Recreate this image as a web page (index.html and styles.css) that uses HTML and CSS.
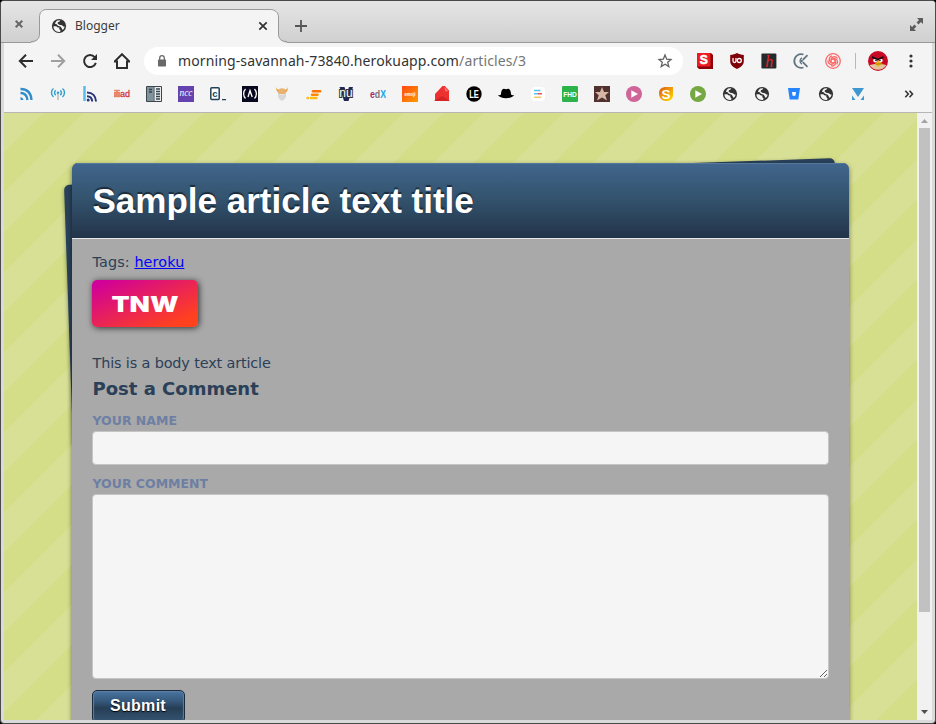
FILE: index.html
```html
<!DOCTYPE html>
<html lang="en">
<head>
<meta charset="utf-8">
<title>Blogger</title>
<link rel="stylesheet" href="styles.css">
</head>
<body>
<svg class="defs" aria-hidden="true">
  <defs>
    <symbol id="globe" viewBox="0 0 16 16">
      <circle cx="8" cy="8" r="7.1" fill="#333"/>
      <path d="M2.500 8.300H5.200L6.800 9.600H8.300V11.200L9.600 12.300L9 13.900C5 14.400 2.200 11.500 2.500 8.300Z" fill="#f4f4f4"/>
      <path d="M6.200 2.400L9.300 2.200L8.600 3.600L6.900 4.300L6.600 5.600L8.200 6.700L11 7.200L12.300 8.500H13.600C13.400 9.800 12.700 11.200 11.800 12L10.600 10.300L9.800 8.700L7 7.700L5.300 6L4 5.900C4.300 4.600 5 3.100 6.200 2.400Z" fill="#f4f4f4"/>
    </symbol>
    <symbol id="play" viewBox="0 0 16 16"><circle cx="8" cy="8" r="8"/><path d="M5.300 4.200V11.800L12 8Z" fill="#fff"/></symbol>
    <linearGradient id="flame" x1="0" y1="0" x2="1" y2="1"><stop offset="0" stop-color="#dc5a12"/><stop offset="1" stop-color="#ffe000"/></linearGradient>
    <linearGradient id="sunset" x1="0" y1="0" x2="1" y2="1"><stop offset="0" stop-color="#ff4b12"/><stop offset="1" stop-color="#ff9b00"/></linearGradient>
  </defs>
</svg>
<div class="window">
  <header class="titlebar">
    <svg class="win-close" width="10" height="10" viewBox="0 0 10 10"><path d="M1.700 1.700L8.300 8.300M8.300 1.700L1.700 8.300" stroke="#666" stroke-width="2" fill="none"/></svg>
    <div class="tab">
      <svg class="tab-shape" width="256" height="34" viewBox="0 0 256 34"><path d="M0 33.500C5.500 33.500 8.500 30 8.500 25V8C8.500 3.500 11 .5 16 .5H239C244 .5 247.500 3.500 247.500 8V25C247.500 30 250.500 33.500 256 33.500V34H0Z" fill="#f4f4f4"/><path d="M0 32.500C5.500 32.500 8.500 30 8.500 25V8C8.500 3.500 11 .5 16 .5H239C244 .5 247.500 3.500 247.500 8V25C247.500 30 250.500 32.500 256 32.500" fill="none" stroke="#999"/></svg>
      <svg class="tab-icon" width="16" height="16"><use href="#globe"/></svg>
      <span class="tab-title">Blogger</span>
      <svg class="tab-close" width="10" height="10" viewBox="0 0 10 10"><path d="M1.300 1.300L8.700 8.700M8.700 1.300L1.300 8.700" stroke="#333" stroke-width="1.700" fill="none"/></svg>
    </div>
    <svg class="new-tab" width="12" height="12" viewBox="0 0 12 12"><path d="M6 0V12M0 6H12" stroke="#555" stroke-width="1.800"/></svg>
    <svg class="expand" width="13" height="13" viewBox="0 0 13 13" fill="#5c5c5c"><path d="M7 0H13V6L10.900 4L8.500 6.400L6.600 4.500L9 2.100ZM6 13H0V7L2.100 9L4.500 6.600L6.400 8.500L4 10.900Z"/></svg>
  </header>

  <div class="inner">
    <div class="toolbar">
      <svg width="16" height="16" viewBox="0 0 16 16" fill="none" stroke="#2d2d2d" stroke-width="2"><path d="M8 1.700L1.800 8L8 14.300M2 8H15"/></svg>
      <svg width="16" height="16" viewBox="0 0 16 16" fill="none" stroke="#a0a0a0" stroke-width="2"><path d="M8 1.700L14.200 8L8 14.300M14 8H1"/></svg>
      <svg width="16" height="16" viewBox="0 0 16 16" fill="none" stroke="#2d2d2d" stroke-width="2"><path d="M12.700 4.200A6 6 0 1 0 13.800 9.900"/><path d="M15 1V7H9Z" fill="#2d2d2d" stroke="none"/></svg>
      <svg width="16" height="16" viewBox="0 0 16 16" fill="none" stroke="#2d2d2d" stroke-width="2"><path d="M.5 8.600H3V15H13V8.600H15.500L8 1.200Z"/></svg>
      <div class="address">
        <svg class="lock" width="10" height="12" viewBox="0 0 10 12"><rect x="1" y="4.500" width="8" height="7" rx=".8" fill="#696969"/><path d="M2.700 5V3A2.300 2.300 0 0 1 7.300 3V5" fill="none" stroke="#696969" stroke-width="1.300"/></svg>
        <span class="url">morning-savannah-73840.herokuapp.com<span class="path">/articles/3</span></span>
        <svg class="star" width="16" height="16" viewBox="0 0 16 16"><path d="M8 2L9.700 6.200L14 6.500L10.700 9.300L11.800 13.600L8 11.200L4.200 13.600L5.300 9.300L2 6.500L6.300 6.200Z" fill="none" stroke="#606060" stroke-width="1.300"/></svg>
      </div>
      <div class="extensions">
        <svg width="16" height="16" viewBox="0 0 16 16"><path d="M0 0H14L16 2V16H2L0 14Z" fill="#8d0008"/><path d="M0 0H13.500V13.500H0Z" fill="#ed1c24"/><text x="6.800" y="11" font-size="12" font-weight="900" text-anchor="middle" stroke="#fff" stroke-width=".6" fill="#fff">S</text></svg>
        <svg width="16" height="16" viewBox="0 0 16 16"><path d="M8 0C10 1 12 1.800 14.800 2V8C14.800 12 12 14 8 16C4 14 1.200 12 1.200 8V2C4 1.800 6 1 8 0Z" fill="#800009"/><path d="M4 5V8A1.500 1.500 0 0 0 7 8V5" fill="none" stroke="#fff" stroke-width="1.300"/><circle cx="10.300" cy="7.500" r="2" fill="none" stroke="#fff" stroke-width="1.300"/></svg>
        <svg width="16" height="16" viewBox="0 0 16 16"><rect x=".4" y=".4" width="15" height="15" rx="1" fill="#252a2d"/><text class="serif" x="8.200" y="13.500" font-size="16" font-style="italic" text-anchor="middle" fill="#e8262a">h</text></svg>
        <svg width="16" height="16" viewBox="0 0 16 16" fill="none" stroke="#607580" stroke-width="1.800"><path d="M10.500 1.500A6.900 6.900 0 1 0 10.500 14.500"/><path d="M9 4.900A3.400 3.400 0 0 0 9 11.100" stroke-width="1.300"/><path d="M9.800 6.800L14.500 2.100M9.800 9.200L14.500 13.900"/><circle cx="8.600" cy="8" r="1.300" fill="#607580" stroke="none"/></svg>
        <svg width="16" height="16" viewBox="0 0 16 16" fill="none" stroke="#ff6868" stroke-width="1.300"><circle cx="8" cy="8" r="7.300"/><circle cx="8" cy="8" r="2"/><path id="swirl" d="M6 7.500C6 3.500 10.500 2.500 12.500 5.500"/><use href="#swirl" transform="rotate(72 8 8)"/><use href="#swirl" transform="rotate(144 8 8)"/><use href="#swirl" transform="rotate(216 8 8)"/><use href="#swirl" transform="rotate(288 8 8)"/></svg>
      </div>
      <span class="divider"></span>
      <svg class="avatar" width="20" height="20" viewBox="0 0 20 20"><circle cx="10" cy="10" r="10" fill="#c90823"/><path d="M1.500 14C5 12.500 15 12.500 18.500 14A10 10 0 0 1 1.500 14Z" fill="#e3c4a0"/><circle cx="7.200" cy="9.500" r="2" fill="#fff"/><circle cx="12.600" cy="9.500" r="2" fill="#fff"/><circle cx="8" cy="9.500" r=".8"/><circle cx="11.900" cy="9.500" r=".8"/><path d="M4 5L9.800 7.500L15.500 5V7.300L9.800 9.200L4 7.300Z" fill="#210c0d"/><path d="M10 9.500L14.500 12.500L10 16L7 13Z" fill="#f2b719"/><path d="M8 13.200L14 12.700" stroke="#855407" stroke-width=".7"/></svg>
      <svg class="menu" width="4" height="14" viewBox="0 0 4 14" fill="#333"><circle cx="2" cy="2" r="1.600"/><circle cx="2" cy="7" r="1.600"/><circle cx="2" cy="12" r="1.600"/></svg>
    </div>

    <nav class="bookmarks">
      <svg viewBox="0 0 16 16" fill="none" stroke="#318dca" stroke-width="2.300"><path d="M2.500 3C9 3 13 7 13.500 14M2.500 7C6.500 7 9 9.500 9.500 14"/><path d="M2.500 11A3.500 3.500 0 0 1 5.500 14H2.500Z" fill="#318dca" stroke="none"/></svg>
      <svg viewBox="0 0 16 16" fill="none" stroke="#35a0d0" stroke-width="1.500"><path d="M3.500 2.500C.8 4.500.8 8.500 3.500 11M12.500 2.500C15.200 4.500 15.200 8.500 12.500 11M5.700 4.300C4.200 5.700 4.200 7.800 5.700 9.300M10.300 4.300C11.800 5.700 11.800 7.800 10.300 9.300"/><circle cx="8" cy="6.800" r="1.300" fill="#35a0d0" stroke="none"/><path d="M8 8V14" stroke="#bbb"/></svg>
      <svg viewBox="0 0 16 16" fill="none" stroke="#28357c" stroke-width="2"><path d="M2.500 0V15" stroke="#59bbee" stroke-width="2.500"/><path d="M5 6.500C10.500 6.500 13.800 10 14 15.500M5 10.300C8 10.300 10 12.200 10.200 15.500"/><circle cx="6.200" cy="14" r="1.500" fill="#28357c" stroke="none"/></svg>
      <svg viewBox="0 0 16 16"><text x="0" y="10.500" font-size="9" textLength="16" lengthAdjust="spacingAndGlyphs" fill="#d33a44" stroke="#d33a44" stroke-width=".3">iliad</text></svg>
      <svg viewBox="0 0 16 16"><path d="M.5 .5H15.500V15.500H.5Z" fill="#e9edee" stroke="#3a464c"/><path d="M1 1H7.500V15H1Z" fill="#80929a"/><path d="M8 1V15" stroke="#36444b"/><path d="M3 3.500H6M3 6H6M10 3H14M10 5.500H14M10 8H14M10 10.500H14M10 13H14" stroke="#36444b" stroke-width="1.400"/></svg>
      <svg viewBox="0 0 16 16"><path d="M0 0H16V16H0Z" fill="#6641b0"/><text class="serif" x="1.500" y="9.500" font-size="10" font-style="italic" textLength="13" lengthAdjust="spacingAndGlyphs" fill="#fff">ncc</text></svg>
      <svg viewBox="0 0 16 16"><rect x=".8" y="1.800" width="8.400" height="11.700" rx="1" fill="#fff" stroke="#204056" stroke-width="1.500"/><text x="5" y="10.700" font-size="9.500" font-weight="700" text-anchor="middle" fill="#204056">c</text><path d="M12 13.700H16" stroke="#204056" stroke-width="1.200"/></svg>
      <svg viewBox="0 0 16 16"><path d="M0 0H16V16H0Z" fill="#080820"/><path d="M3.500 3C1 5.500 1 10 3.500 12.500M12.500 3C15 5.500 15 10 12.500 12.500M6 11L8 4.500L10.200 11M8 4.500L9 8" fill="none" stroke="#fff" stroke-width="1.300"/></svg>
      <svg viewBox="0 0 16 16"><path d="M2.500 1C2.500 3 4 3.500 5 3.800H11C12 3.500 13.500 3 13.500 1C14.500 4 13 6 11 7H5C3 6 1.500 4 2.500 1Z" fill="#e8a64c"/><path d="M5 3C7 2 9 2 11 3L12 8H4Z" fill="#e9b273"/><path d="M4 7L6 8.500H10L12 7V10C12 12 10 14 8 15C6 14 4 12 4 10Z" fill="#d8d8d8"/></svg>
      <svg viewBox="0 0 16 16" fill="none" stroke-linecap="round" stroke-width="2.500"><path d="M7 5.300H14" stroke="#ff7200"/><path d="M6 8.800H11.500" stroke="#ff8a00"/><path d="M5 12H10.500M1.500 12H2" stroke="#ffbd13"/></svg>
      <svg viewBox="0 0 16 16"><path d="M1.500 1H6.500L8.500 8L11 1H15L10.500 15H6Z" fill="#202656"/><text x="8" y="11" font-size="12" font-weight="400" text-anchor="middle" stroke="#333" stroke-width="2" paint-order="stroke" fill="#fff">nu</text></svg>
      <svg viewBox="0 0 16 16"><text x="0" y="11.500" font-size="10.500" font-weight="700" textLength="16" lengthAdjust="spacingAndGlyphs"><tspan fill="#a12a77">e</tspan><tspan fill="#777">d</tspan><tspan fill="#10a5ec">X</tspan></text></svg>
      <svg viewBox="0 0 16 16"><path d="M0 0H16V16H0Z" fill="url(#sunset)"/><text x="2.500" y="10" font-size="6" font-weight="700" textLength="11" lengthAdjust="spacingAndGlyphs" fill="#fff">emoji</text></svg>
      <svg viewBox="0 0 16 16"><path d="M1 8L8.500 0H11L15 4.500V15H1Z" fill="#ed3030"/><path d="M0 15L8 10L16 15Z" fill="#d62323"/><path d="M10.500 .5L14.500 5L11 5.500Z" fill="#ff7070"/></svg>
      <svg viewBox="0 0 16 16"><circle cx="8" cy="8" r="7.700"/><text x="3.200" y="12" font-size="11" font-weight="700" textLength="9.600" lengthAdjust="spacingAndGlyphs" fill="#fff">LE</text></svg>
      <svg viewBox="0 0 16 16"><path d="M3 8.500C3 5 4 2.500 6 2.700C7.200 3.300 8.800 3.300 10 2.700C12 2.500 13 5 13 8.500C14 9.300 15 9.200 16 9C15 11 12 12.200 8 12.200C4 12.200 1 11 0 9C1 9.200 2 9.300 3 8.500Z"/></svg>
      <svg viewBox="0 0 16 16"><rect x="1" y="1" width="14" height="14" rx="4" fill="#fff"/><path d="M4 4.500H10.500M4 7.700H8" stroke="#51c4e8" stroke-width="1.500"/><path d="M8 7.700H12" stroke="#ee4d5c" stroke-width="1.500"/><path d="M4 11.300H11.500" stroke="#f4ca68" stroke-width="1.500"/></svg>
      <svg viewBox="0 0 16 16"><rect width="16" height="16" rx="1.200" fill="#2cb34b"/><text x="1.200" y="10.700" font-size="7.200" font-weight="700" textLength="13.600" lengthAdjust="spacingAndGlyphs" fill="#fff">FHD</text></svg>
      <svg viewBox="0 0 16 16"><path d="M0 0H16V16H0Z" fill="#51312d"/><path d="M8 1L10 6L15 6L11.300 9.200L13 14.500L8 11.500L3 14.500L4.700 9.200L1 6L6 6Z" fill="#d6b5a5"/></svg>
      <svg viewBox="0 0 16 16" fill="#cf6599"><use href="#play"/></svg>
      <svg viewBox="0 0 16 16"><path d="M1 7C1 3 4 1 8 1H15V9C15 13 12 15 8 15S1 12 1 7Z" fill="url(#flame)"/><text x="8" y="13" font-size="13.500" font-weight="700" text-anchor="middle" fill="#fff">S</text></svg>
      <svg viewBox="0 0 16 16" fill="#75a843"><use href="#play"/></svg>
      <svg viewBox="0 0 16 16"><use href="#globe"/></svg>
      <svg viewBox="0 0 16 16"><use href="#globe"/></svg>
      <svg viewBox="0 0 16 16"><path d="M2 2H14L12.300 13.500H3.700Z" fill="#2684ff"/><path d="M6 6H10L9.400 9.700H6.600Z" fill="#fff"/></svg>
      <svg viewBox="0 0 16 16"><use href="#globe"/></svg>
      <svg viewBox="0 0 16 16" fill="#3f97d0"><path d="M2 2H14L8 11ZM2 9.500L5.500 14H2ZM14 9.500L10.500 14H14Z"/></svg>
      <svg class="more" viewBox="0 0 16 16" fill="none" stroke="#333" stroke-width="1.600"><path d="M4.300 4.800L7.300 8L4.300 11.200M8.500 4.800L11.500 8L8.500 11.200"/></svg>
    </nav>

    <div class="viewport">
      <main class="page">
        <div class="stack">
          <div class="sheet"></div>
          <article class="card">
            <h1>Sample article text title</h1>
            <div class="content">
              <p class="tags">Tags: <a href="#">heroku</a></p>
              <svg class="photo" width="106" height="47" viewBox="0 0 106 47" role="img"><defs><linearGradient id="tnw" x1="0" y1="0" x2="1" y2="1"><stop offset=".06" stop-color="#d0009a"/><stop offset=".85" stop-color="#ff4020"/><stop offset="1" stop-color="#ff421c"/></linearGradient></defs><path d="M0 0H106V47H0Z" fill="url(#tnw)"/><text x="19.500" y="32" textLength="67" lengthAdjust="spacingAndGlyphs">TNW</text></svg>
              <p class="body">This is a body text article</p>
              <h3>Post a Comment</h3>
              <form>
                <label for="name">Your Name</label>
                <input id="name" type="text">
                <label for="comment">Your Comment</label>
                <textarea id="comment"></textarea>
                <button type="button">Submit</button>
              </form>
            </div>
          </article>
        </div>
      </main>
      <div class="scrollbar">
        <svg width="15" height="15" viewBox="0 0 15 15"><path d="M4 10H11L7.500 6Z" fill="#a3a3a3"/></svg>
        <div class="thumb"></div>
        <svg class="down" width="15" height="15" viewBox="0 0 15 15"><path d="M4 5H11L7.500 9Z" fill="#505050"/></svg>
      </div>
    </div>
  </div>
</div>
</body>
</html>
```
FILE: styles.css
```css
* { box-sizing: border-box; }
body { margin: 0; background: #000; }
svg { display: block; flex: none; }
svg text { font-family: "Liberation Sans", sans-serif; }
svg text.serif { font-family: "Liberation Serif", serif; }
.defs { position: absolute; width: 0; height: 0; }

.window {
  width: 936px; height: 724px; overflow: hidden;
  display: flex; flex-direction: column;
  border: 1px solid #4b494a; border-radius: 4px;
  background: #dadada;
}

.titlebar {
  height: 42px; flex: none;
  display: flex; align-items: flex-start;
  background: linear-gradient(#e5e5e5, #d0d0d0);
  border-bottom: 1px solid #999;
}
.win-close { margin: 18px 0 0 13px; }
.tab {
  position: relative;
  width: 256px; height: 34px;
  margin: 8px 0 -1px 7px;
  padding: 0 20px 1px;
  display: flex; align-items: center;
}
.tab-shape { position: absolute; left: 0; top: 0; }
.tab-icon { position: relative; }
.tab-title {
  position: relative; flex: 1; margin-left: 8px;
  font: 12px/18px "Noto Sans", sans-serif; color: #3c3c3c;
}
.tab-close { position: relative; margin-right: -1px; }
.new-tab { margin: 19px 0 0 8px; }
.expand { margin: 17px 12px 0 auto; }

.inner { flex: 1; min-height: 0; margin: 0 3px 3px; display: flex; flex-direction: column; background: #f4f4f4; }

.toolbar { height: 36px; flex: none; display: flex; align-items: center; gap: 16px; padding-left: 14px; }
.address {
  width: 539px; height: 28px; margin-left: -2px;
  display: flex; align-items: center;
  padding: 0 10px 0 13px; border-radius: 14px; background: #fff;
}
.url { flex: 1; margin-left: 11px; font: 14px/20px "Noto Sans", sans-serif; letter-spacing: .12px; color: #333; white-space: nowrap; }
.path { color: #757575; }
.extensions { display: flex; gap: 16px; margin-left: -2px; }
.divider { width: 1px; height: 16px; margin-left: -2px; background: #b8b8b8; }
.avatar { margin-left: -4px; }
.menu { margin-left: 4.500px; }

.bookmarks {
  height: 34px; flex: none;
  display: flex; align-items: flex-start; gap: 16px;
  padding: 7px 14px 0; border-bottom: 1px solid #b6b6b6;
}
.bookmarks svg { width: 16px; height: 16px; }
.bookmarks .more { margin: 0 1px 0 auto; }

.viewport { flex: 1; min-height: 0; display: flex; }
.page {
  flex: 1; overflow: hidden; padding: 50px 68px 0;
  background: #d4dd87 linear-gradient(135deg, #d8e096 25%, transparent 25%, transparent 50%, #d8e096 50%, #d8e096 75%, transparent 75%) 0 0 / 80px 80px;
}
.stack { position: relative; width: 777px; }
.sheet {
  position: absolute; left: -8px; top: 22px;
  width: 771px; height: 260px;
  border-radius: 5px; background: #29425a;
  box-shadow: 0 2px 4px rgba(0, 0, 0, .4);
  transform: rotate(-2deg); transform-origin: 0 0;
}
.card {
  position: relative; height: 640px; overflow: hidden;
  border-radius: 6px; background: #a9a9a9;
}
.stack::before {
  content: ""; position: absolute; inset: 0; z-index: 1;
  border-radius: 6px; box-shadow: 0 2px 5px rgba(0, 0, 0, .5);
  pointer-events: none;
}
.card h1 {
  height: 76px; margin: 0; padding: 0 20.5px;
  font: bold 35px/76px "Liberation Sans", sans-serif;
  color: #fff; text-shadow: 0 -2px 1px rgba(0, 0, 0, .5);
  background: linear-gradient(#41658d, #34546f 45%, #23344a);
  border-bottom: 1px solid #e6e6e6;
  box-shadow: inset 0 1px 0 #55789d;
}
.content { padding: 12px 20px 0; font: 14.4px/22px "DejaVu Sans", sans-serif; color: #2b4058; }
.content p { margin: 0; padding-left: .5px; }
.tags { letter-spacing: .1px; }
.content a { color: #00f; }
.photo { margin-top: 7px; border-radius: 5px; box-shadow: 1px 1px 6px rgba(0, 0, 0, .7); }
.photo text { font: 900 22px "Inter", sans-serif; fill: #fff; }
.content .body { margin-top: 25px; letter-spacing: -.13px; }
.content h3 { margin: 2px 0 0; padding-left: .5px; font-size: 18px; line-height: 26px; }
form { display: flex; flex-direction: column; }
label { padding-left: .5px; margin-top: 9px; font-size: 12.5px; line-height: 20px; font-weight: bold; text-transform: uppercase; color: #6d7fa3; }
input, textarea {
  display: block; width: 737px; margin: 0; padding: 6px;
  border: 1px solid #c5c5c5; border-radius: 4px; background: #f5f5f5; outline: 0;
}
input { height: 34px; }
textarea { height: 185px; resize: vertical; }
button {
  width: 93px; height: 33px; margin-top: 11px; padding: 0 1px 2px 0;
  border: 1px solid #1c2b3b; border-radius: 5px;
  font: bold 16px/20px "Liberation Sans", sans-serif; letter-spacing: .3px; color: #fff;
  text-shadow: 0 1px 1px #000;
  background: linear-gradient(#4a74a0, #35577a 35%, #263e55 55%, #355472);
  box-shadow: inset 0 0 1px 1px #5d81a8;
}

.scrollbar { width: 15px; display: flex; flex-direction: column; align-items: center; background: #f1f1f1; }
.thumb { width: 11px; height: 484px; background: #c1c1c1; }
.down { margin-top: auto; }
```
